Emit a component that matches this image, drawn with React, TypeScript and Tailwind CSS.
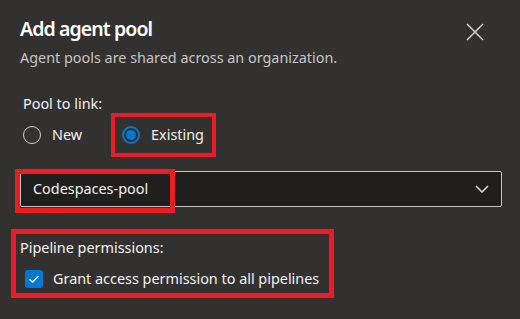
import React from "react";

export default function App() {
  const font = { fontFamily: '"Noto Sans", "Open Sans", sans-serif' };
  return (
    <div className="relative w-[520px] h-[319px] bg-[#323130] overflow-hidden text-[#f3f2f1]" style={font}>
      <div className="flex items-start justify-between pl-[20px] pr-[36px] pt-[15px]">
        <div className="flex flex-col">
          <div className="text-[19.5px] font-semibold leading-[28px] tracking-[-0.9px] text-white">Add agent pool</div>
          <div className="text-[14.4px] leading-[20px] mt-[5px] text-[#c8c6c4]">Agent pools are shared across an organization.</div>
        </div>
        <svg width="18" height="18" viewBox="0 0 18 18" className="mt-[8px]">
          <path d="M1 1 L17 17 M17 1 L1 17" stroke="#e1dfdd" strokeWidth="1.4" />
        </svg>
      </div>

      <div className="px-[20px] mt-[26px] text-[14.4px]">
        <div className="leading-[20px] pl-[3px]">Pool to link:</div>
        <div className="flex items-center mt-[11px] pl-[3px]">
          <div className="flex items-center">
            <div className="w-[18px] h-[18px] rounded-full border border-[#d2d0ce]" />
            <span className="ml-[11px] leading-[20px]">New</span>
          </div>
          <div className="flex items-center ml-[40px]">
            <div className="w-[18px] h-[18px] rounded-full border-2 border-[#0078d4] flex items-center justify-center">
              <div className="w-[10px] h-[10px] rounded-full bg-[#0078d4]" />
            </div>
            <span className="ml-[11px] leading-[20px]">Existing</span>
          </div>
        </div>

        <div className="mt-[26px] h-[36px] w-[482px] border border-[#c8c6c4] rounded-[2px] bg-[#201f1e] flex items-center justify-between pl-[12px] pr-[12px]">
          <span className="leading-[20px]">Codespaces-pool</span>
          <svg width="14" height="8" viewBox="0 0 14 8">
            <path d="M1 1 L7 7 L13 1" stroke="#e1dfdd" strokeWidth="1.5" fill="none" />
          </svg>
        </div>

        <div className="mt-[31px] leading-[20px]">Pipeline permissions:</div>
        <div className="flex items-center mt-[11px] pl-[5px]">
          <div className="w-[18px] h-[18px] rounded-[3px] bg-[#0078d4] flex items-center justify-center">
            <svg width="12" height="10" viewBox="0 0 12 10">
              <path d="M1.5 5.2 L4.5 8 L10.5 2" stroke="#ffffff" strokeWidth="1.3" fill="none" />
            </svg>
          </div>
          <span className="ml-[10px] leading-[20px]">Grant access permission to all pipelines</span>
        </div>
      </div>

      {/* annotation boxes */}
      <div className="absolute left-[111px] top-[113px] w-[105px] h-[44px] border-[4px] border-[#ed1c24]" />
      <div className="absolute left-[15px] top-[169px] w-[160px] h-[44px] border-[5px] border-[#ed1c24]" />
      <div className="absolute left-[11px] top-[229px] w-[323px] h-[69px] border-[5px] border-[#ed1c24]" />
    </div>
  );
}
